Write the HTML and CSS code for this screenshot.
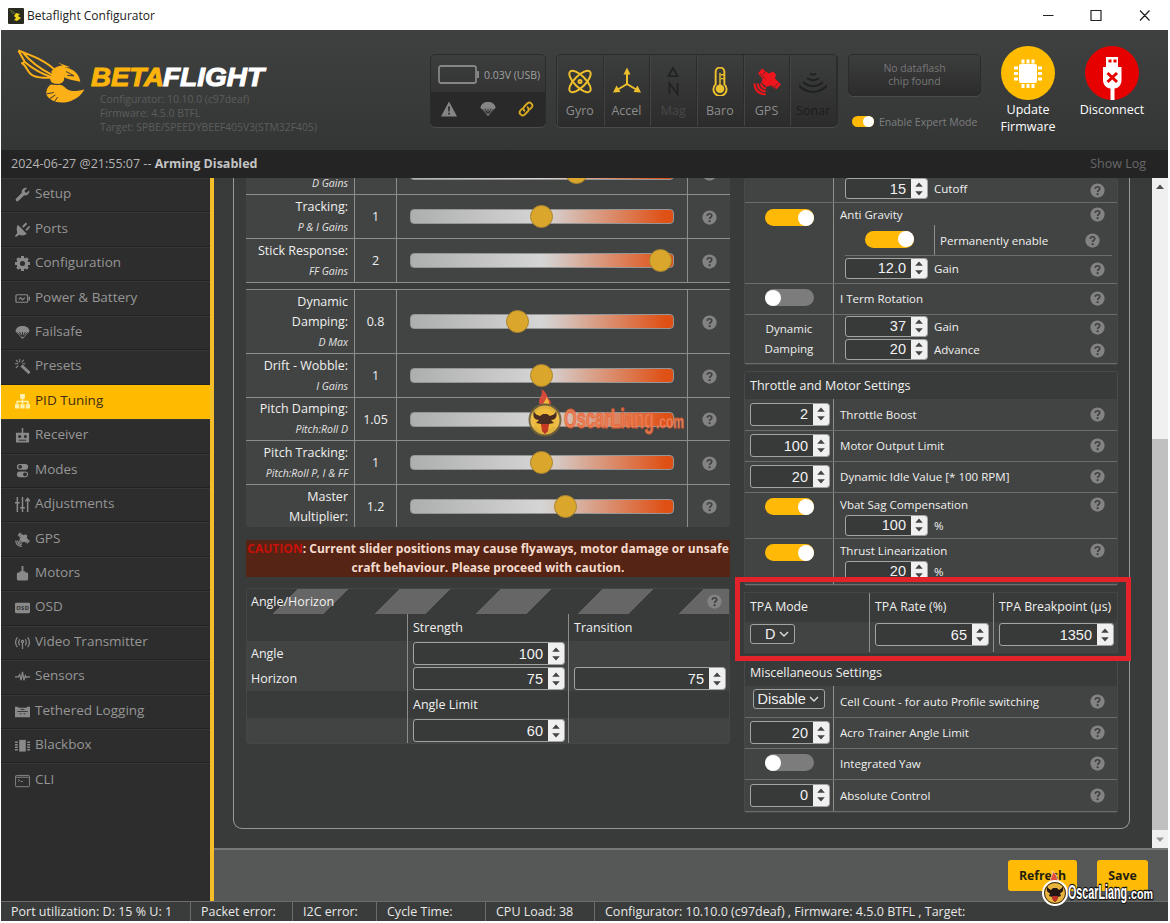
FILE: index.html
```html
<!DOCTYPE html>
<html lang="en">
<head>
<meta charset="utf-8">
<title>Betaflight Configurator</title>
<link rel="stylesheet" href="styles.css">
</head>
<body>
<svg class="defs" width="0" height="0">
  <symbol id="spin" viewBox="0 0 16 22"><path d="M8 4.500l3.800 4.200H4.200zM8 17.500l3.800-4.200H4.200z" fill="#444"/></symbol>
  <symbol id="help" viewBox="0 0 16 16"><circle cx="8" cy="8" r="7.600" fill="#828382"/><path d="M5.600 6.300C5.700 4.700 6.700 4 8 4s2.400.8 2.400 2.100C10.400 7.700 8.100 7.800 8.100 9.600" fill="none" stroke="#3f4040" stroke-width="1.800"/><circle cx="8.100" cy="11.900" r="1.150" fill="#3f4040"/></symbol>
  <symbol id="chev" viewBox="0 0 10 8"><path d="M1 2l4 4 4-4" fill="none" stroke="#ddd" stroke-width="1.400"/></symbol>
  <symbol id="chute" viewBox="0 0 16 16"><path d="M.5 6.500C1 3 4 1 8 1s7 2 7.500 5.500L14.500 8 8 15 1.500 8z" fill="currentColor"/><path d="M2.500 8L7.400 13M13.500 8L8.600 13M5 7.500L7.500 12.500M11 7.500L8.500 12.500M8 7.500V12" stroke="#2c2c2c" stroke-width="1" fill="none"/></symbol>
  <symbol id="sat" viewBox="0 0 28 28"><g fill="currentColor"><path d="M9 1l7 5 4-2 3 3-1 4 6 6-5 5-6-4-3.500 1.500-5-4.500 1-4L5 6z"/></g><path d="M7 6.500l5 4.500M18.500 18l5 4M13 3l-3 4M24.500 16l-3 4" stroke="#2f3030" stroke-width=".7"/><g fill="none" stroke="currentColor" stroke-width="2.200"><path d="M8 16c.2 2.500 1.800 4.500 5 5M4.700 16c.3 4.500 3.200 7.500 8 8M1.400 16c.3 6.500 4.500 10.500 11.300 11"/></g></symbol>
</svg>

<div class="window">
  <div class="titlebar">
    <svg class="app-icon" viewBox="0 0 16 16"><rect width="16" height="16" rx="1" fill="#292b20"/><path d="M1.500 2l3 1 3 3M3 4l3 2" stroke="#66702e" fill="none"/><path d="M8 5l4 1-2 2 3 2-4 3-3-1 2-2-2-2z" fill="#efd51c"/></svg>
    <span class="title">Betaflight Configurator</span>
    <svg class="win-buttons" viewBox="0 0 107 12" fill="none" stroke="#222" stroke-width="1.200"><path d="M0 5.500h10.500M48 .5h10v10h-10zM97 .5l9.500 10M106.500 .5l-9.500 10"/></svg>
  </div>

  <header class="header">
    <div class="brand">
      <svg class="wasp" viewBox="50 148 204 164">
        <g fill="none" stroke="#fcb017" stroke-width="6" stroke-linejoin="round"><path d="M54 152c36 14 84 30 113 62M54 152l20 35-9 3c18 11 14 30 35 38 16 7 35 6 52 6M67 157c22 28 48 48 88 68M74 187c22 18 44 33 78 44"/></g>
        <g fill="#fcb017"><path d="M172 188l38 14-18 1c28 3 44 18 48 43l-29-6-28-10-6-7c-10-5-19-3-20 9l-4-17c7-11 19-17 34-18z"/><path d="M160 220c12-6 27-1 31 12 3 13-8 22-21 20-14 1-22-8-20-18 1-6 4-11 10-14z"/><path d="M152 254c18-4 35 0 43 10 9 10 22 13 57 5-9 19-32 36-60 39-30 3-56-14-54-29 0-10 5-20 14-25z"/></g>
        <g fill="none" stroke="#373938" stroke-width="3"><path d="M197 215l24 13-20-1M160 278l-20 4M165 285l-17 12M172 292l-10 14M154 252c11 4 28 3 36-4"/></g>
      </svg>
      <div class="brand-text">
        <svg class="wordmark" viewBox="0 0 178 26"><text x="0" y="21" textLength="73" lengthAdjust="spacingAndGlyphs" fill="#fcb40c" stroke="#fcb40c">BETA</text><text x="72" y="21" textLength="101" lengthAdjust="spacingAndGlyphs" fill="#fff" stroke="#fff">FLIGHT</text></svg>
        <div class="version">Configurator: 10.10.0 (c97deaf)<br>Firmware: 4.5.0 BTFL<br>Target: SPBE/SPEEDYBEEF405V3(STM32F405)</div>
      </div>
    </div>

    <div class="power-box">
      <div class="volt"><svg viewBox="0 0 42 20"><rect x="1" y="1" width="37" height="17" rx="2" fill="none" stroke="#858585" stroke-width="1.800"/><path d="M39 6h2v7h-2z" fill="#858585"/></svg><span>0.03V (USB)</span></div>
      <div class="flags">
        <svg viewBox="0 0 16 16"><path d="M8 .5L16 15.500H0z" fill="#858585"/><path d="M7 5.500h2l-.4 5H7.400zM7.200 11.800h1.700v1.700H7.200z" fill="#292929"/></svg>
        <svg viewBox="0 0 16 16" color="#858585"><use href="#chute"/></svg>
        <svg viewBox="0 0 16 16" fill="none" stroke="#d9a91f" stroke-width="1.900" stroke-linecap="round"><path d="M6.300 9.700a3 3 0 0 1 0-4.200L9.500 2.300a3 3 0 0 1 4.200 4.200L12 8.200"/><path d="M9.700 6.300a3 3 0 0 1 0 4.200L6.500 13.700a3 3 0 0 1-4.200-4.200L4 7.800"/></svg>
      </div>
    </div>

    <div class="sensors">
      <div class="sensor"><svg viewBox="0 0 28 28" fill="none" stroke="#eec02d" stroke-width="2"><ellipse cx="14" cy="14" rx="14" ry="5.600" transform="rotate(45 14 14)"/><ellipse cx="14" cy="14" rx="14" ry="5.600" transform="rotate(-45 14 14)"/><circle cx="14" cy="14" r="1.500"/></svg><span>Gyro</span></div>
      <div class="sensor"><svg viewBox="0 0 28 28" fill="#eec02d"><path d="M14 0l3.500 7h-7zM0 25l3.500-7 4 6.500zM28 25l-3.500-7-4 6.500z"/><path d="M14 5v11.500L4 22.500M14 16.500l10 6" fill="none" stroke="#eec02d" stroke-width="2"/></svg><span>Accel</span></div>
      <div class="sensor off mag"><svg viewBox="0 0 28 32" fill="none" stroke="#222" stroke-width="2"><path d="M9 10l5-9 5 9zM10 30V18l9 12V18"/></svg><span>Mag</span></div>
      <div class="sensor"><svg viewBox="0 0 28 30" fill="none" stroke="#eec02d" stroke-width="2"><path d="M9.500 18V5a4.500 4.500 0 0 1 9 0v13a6.800 6.800 0 1 1-9 0z"/><circle cx="14" cy="22.500" r="4.500" fill="#eec02d" stroke="none"/><path d="M14 6v15M15 8h3M15 12h3" stroke-width="1.500"/></svg><span>Baro</span></div>
      <div class="sensor red"><svg viewBox="0 0 28 28"><use href="#sat"/></svg><span>GPS</span></div>
      <div class="sensor off"><svg viewBox="0 0 28 24" fill="none" stroke="#202121" stroke-width="2"><path d="M11 4c2 1.500 4 1.500 6 0M8 8.500c4 3 8 3 12 0M4 12.500c6 5.500 14 5.500 20 0M0 16c8 8.500 20 8.500 28 0"/></svg><span>Sonar</span></div>
    </div>

    <div class="expert">
      <div class="dataflash">No dataflash<br>chip found</div>
      <div class="expert-line"><i class="toggle mini on"></i><span>Enable Expert Mode</span></div>
    </div>

    <div class="action">
      <svg viewBox="0 0 54 54"><circle cx="27" cy="27" r="27" fill="#ffbb00"/><rect x="18" y="18" width="18" height="19" rx="2" fill="#fff"/><path d="M22 13.500v4M27 13.500v4M32 13.500v4M22 38v4M27 38v4M32 38v4M13 22h4M13 27.500h4M13 33h4M37 22h4M37 27.500h4M37 33h4" stroke="#fff" stroke-width="3"/></svg>
      <span>Update<br>Firmware</span>
    </div>
    <div class="action disc">
      <svg viewBox="0 0 54 54"><circle cx="27" cy="27" r="27" fill="#e60000"/><path d="M21 11h12v10h3.500v13c0 5-3 8-7 8.500V54h-4V42.500c-4-.5-7.500-3.500-7.500-8.500V21h3z" fill="#fff"/><path d="M23.500 13.500h3v3h-3zM28.500 13.500h3v3h-3z" fill="#e60000"/><path d="M22.500 27l9.500 9M32 27l-9.500 9" stroke="#e60000" stroke-width="3"/></svg>
      <span>Disconnect</span>
    </div>
  </header>

  <div class="logbar"><span>2024-06-27 @21:55:07 -- <b>Arming Disabled</b></span><span class="show-log">Show Log</span></div>

  <div class="body">
    <nav class="sidebar">
      <a><svg viewBox="0 0 16 16"><path d="M1 12.500l6.300-6.300C6.500 3 9.500 0 13 1l-2.800 2.800.4 1.900 1.900.4L15.200 3.500c.8 3.300-2.200 6.300-5.300 5.300L3.500 15A1.800 1.800 0 0 1 1 12.500z"/></svg>Setup</a>
      <a><svg viewBox="0 0 16 16"><path d="M3 3l9.500 9.500C10 15 6.500 14.500 4.500 13.500L1 16 0 15l2.500-3.500C1.500 9 1.500 5.500 3 3zM7.500 4.500L11.500.5l1.500 1.500-4 4zM11.200 8l4-4L16 5.500l-3.500 4z"/></svg>Ports</a>
      <a><svg viewBox="0 0 16 16"><circle cx="8" cy="8" r="4.500" fill="none" stroke="currentColor" stroke-width="3.600"/><path d="M8 0v3M8 13v3M0 8h3M13 8h3M2.400 2.400l2 2M11.600 11.600l2 2M2.400 13.600l2-2M11.600 4.400l2-2" stroke="currentColor" stroke-width="3.200"/></svg>Configuration</a>
      <a><svg viewBox="0 0 16 16" fill="none" stroke="currentColor" stroke-width="1.300"><rect x="1" y="4" width="12.500" height="8" rx="1"/><path d="M15.300 6v4M4 9l2-2 2 2.500L10.500 7"/></svg>Power &amp; Battery</a>
      <a><svg viewBox="0 0 16 16"><use href="#chute"/></svg>Failsafe</a>
      <a><svg viewBox="0 0 16 16"><path d="M6.500 8L8 6.500l8 7.500-1.500 1.500zM5 0v3.500M0 5h3.500M1 1l2.500 2.500M9.500 1L7 3.500M1 9.500L3.500 7M11 5H8" stroke="currentColor" stroke-width="1.100"/></svg>Presets</a>
      <a class="active"><svg viewBox="0 0 16 16"><path d="M5.500 0h5v5h-5zM0 11h4.600v4.500H0zM5.700 11h4.600v4.500H5.700zM11.400 11H16v4.500h-4.600z"/><path d="M8 4v7M2.300 11V8h11.400v3" fill="none" stroke="currentColor" stroke-width="1.600"/></svg>PID Tuning</a>
      <a><svg viewBox="0 0 16 16"><path d="M7.200 0h1.600v5H15v10.500H1V5h6.200z"/><g fill="#2d2d2d"><circle cx="5" cy="9" r="1.600"/><circle cx="11" cy="9" r="1.600"/><path d="M4 12.500h8v1H4z"/></g></svg>Receiver</a>
      <a><svg viewBox="0 0 16 16"><rect x="2" y="1" width="12" height="6.200" rx="3.100"/><rect x="2" y="9" width="12" height="6.200" rx="3.100"/><g fill="#2d2d2d"><circle cx="5.500" cy="4.100" r="2"/><circle cx="10.700" cy="12.100" r="2"/></g></svg>Modes</a>
      <a><svg viewBox="0 0 16 16" fill="none" stroke="currentColor" stroke-width="1.600"><path d="M2.500 0v16M0 6h5M8 0v16M5.500 11.500h5M13.500 2v14M11 4.500L13.500 1.500 16 4.500"/></svg>Adjustments</a>
      <a><svg viewBox="0 0 28 28"><use href="#sat"/></svg>GPS</a>
      <a><svg viewBox="0 0 16 16"><path d="M7 0h2v5.500h2V7h1.500c1 0 1.500.6 1.500 1.500V14l-1 1.500H3L2 14V8.500C2 7.600 2.500 7 3.500 7H5V5.500h2z"/></svg>Motors</a>
      <a><svg viewBox="0 0 16 16"><rect y="3" width="16" height="11" rx="1.200"/><text x="1.300" y="10.800" font-size="6" font-weight="700" textLength="13.400" fill="#2d2d2d">OSD</text></svg>OSD</a>
      <a><svg viewBox="0 0 16 16" fill="none" stroke="currentColor" stroke-width="1.300"><path d="M8 8v7M2.500 2.500C0 6 0 9.500 2.500 13M13.500 2.500C16 6 16 9.500 13.500 13M5 4.500C3.500 7 3.500 8.800 5 11M11 4.500c1.500 2.500 1.500 4.300 0 6.500"/><circle cx="8" cy="7" r="1.200"/></svg>Video Transmitter</a>
      <a><svg viewBox="0 0 16 16" fill="none" stroke="currentColor" stroke-width="1.300"><path d="M0 8.500h3.500L5 6l1.500 6L8 3l1.500 9L11 7l1 2 1-.5h3"/></svg>Sensors</a>
      <a><svg viewBox="0 0 16 16"><path d="M0 3h3l1 1h8l1-1h3v11H0z"/><path d="M2.500 8h11M5 10.500h2M9 10.500h2M6 5.800h4" stroke="#2d2d2d" stroke-width=".9"/></svg>Tethered Logging</a>
      <a><svg viewBox="0 0 16 16"><path d="M4.500 2h7v12.500h-7z"/><path d="M0 4.500h3M0 7.200h3M0 9.900h3M0 12.600h3M13 4.500h3M13 7.200h3M13 9.900h3M13 12.600h3" stroke="currentColor" stroke-width="1.500"/></svg>Blackbox</a>
      <a class="cli"><svg viewBox="0 0 16 16" fill="none" stroke="currentColor"><rect x=".6" y="2.600" width="14.800" height="12" rx="1"/><path d="M1 4.500h14M3.500 7l1.500 1-1.500 1M6 9h2.500"/></svg>CLI</a>
    </nav>

    <div class="main">
      <div class="scroll-row">
        <div class="viewport">
          <div class="panel">
            <div class="col-left">
              <div class="sliders">
                <div class="srow clipped"><div class="lbl"><em>D Gains</em></div><div class="val"></div><div class="sl"><div class="track"><i style="left:63.300%"></i></div></div><div class="hp"><svg class="help"><use href="#help"/></svg></div></div>
                <div class="srow"><div class="lbl">Tracking:<em>P &amp; I Gains</em></div><div class="val">1</div><div class="sl"><div class="track"><i style="left:49.800%"></i></div></div><div class="hp"><svg class="help"><use href="#help"/></svg></div></div>
                <div class="srow"><div class="lbl">Stick Response:<em>FF Gains</em></div><div class="val">2</div><div class="sl"><div class="track"><i style="left:95.300%"></i></div></div><div class="hp"><svg class="help"><use href="#help"/></svg></div></div>
              </div>
              <div class="sliders second">
                <div class="srow tall"><div class="lbl">Dynamic<br>Damping:<em>D Max</em></div><div class="val">0.8</div><div class="sl"><div class="track"><i style="left:40.700%"></i></div></div><div class="hp"><svg class="help"><use href="#help"/></svg></div></div>
                <div class="srow"><div class="lbl">Drift - Wobble:<em>I Gains</em></div><div class="val">1</div><div class="sl"><div class="track"><i style="left:49.800%"></i></div></div><div class="hp"><svg class="help"><use href="#help"/></svg></div></div>
                <div class="srow short"><div class="lbl">Pitch Damping:<em>Pitch:Roll D</em></div><div class="val">1.05</div><div class="sl"><div class="track"><i style="left:51%"></i></div></div><div class="hp"><svg class="help"><use href="#help"/></svg></div></div>
                <div class="srow"><div class="lbl">Pitch Tracking:<em>Pitch:Roll P, I &amp; FF</em></div><div class="val">1</div><div class="sl"><div class="track"><i style="left:49.800%"></i></div></div><div class="hp"><svg class="help"><use href="#help"/></svg></div></div>
                <div class="srow last"><div class="lbl">Master<br>Multiplier:</div><div class="val">1.2</div><div class="sl"><div class="track"><i style="left:59%"></i></div></div><div class="hp"><svg class="help"><use href="#help"/></svg></div></div>
              </div>

              <div class="caution"><span>CAUTION</span>: Current slider positions may cause flyaways, motor damage or unsafe<br>craft behaviour. Please proceed with caution.</div>

              <div class="angle">
                <div class="angle-head"><span>Angle/Horizon</span><svg class="help"><use href="#help"/></svg></div>
                <div class="arow dark"><div></div><div>Strength</div><div>Transition</div></div>
                <div class="arow"><div>Angle</div><div><span class="num">100<svg><use href="#spin"/></svg></span></div><div></div></div>
                <div class="arow"><div>Horizon</div><div><span class="num">75<svg><use href="#spin"/></svg></span></div><div><span class="num">75<svg><use href="#spin"/></svg></span></div></div>
                <div class="arow dark"><div></div><div>Angle Limit</div><div></div></div>
                <div class="arow"><div></div><div><span class="num">60<svg><use href="#spin"/></svg></span></div><div></div></div>
              </div>
            </div>

            <div class="col-right">
              <div class="table">
                <div class="trow h25"><div class="c1"></div><div class="c2"><div class="line sub cut"><span class="num small">15<svg><use href="#spin"/></svg></span>Cutoff<svg class="help"><use href="#help"/></svg></div></div></div>
                <div class="trow h81"><div class="c1 top"><i class="toggle on"></i></div><div class="c2">
                  <div class="line l22">Anti Gravity<svg class="help"><use href="#help"/></svg></div>
                  <div class="line perm"><div><i class="toggle on"></i></div><span>Permanently enable</span><svg class="help"><use href="#help"/></svg></div>
                  <div class="line sub l25"><span class="num small">12.0<svg><use href="#spin"/></svg></span>Gain<svg class="help"><use href="#help"/></svg></div>
                </div></div>
                <div class="trow h31"><div class="c1 off"><i class="toggle"></i></div><div class="c2"><div class="line">I Term Rotation<svg class="help"><use href="#help"/></svg></div></div></div>
                <div class="trow h49"><div class="c1 damp">Dynamic<br>Damping</div><div class="c2">
                  <div class="line sub l23"><span class="num small">37<svg><use href="#spin"/></svg></span>Gain<svg class="help"><use href="#help"/></svg></div>
                  <div class="line sub l23"><span class="num small">20<svg><use href="#spin"/></svg></span>Advance<svg class="help"><use href="#help"/></svg></div>
                </div></div>
              </div>

              <div class="table">
                <div class="thead">Throttle and Motor Settings</div>
                <div class="trow h32"><div class="c1"><span class="num">2<svg><use href="#spin"/></svg></span></div><div class="c2"><div class="line">Throttle Boost<svg class="help"><use href="#help"/></svg></div></div></div>
                <div class="trow h31"><div class="c1"><span class="num">100<svg><use href="#spin"/></svg></span></div><div class="c2"><div class="line">Motor Output Limit<svg class="help"><use href="#help"/></svg></div></div></div>
                <div class="trow h31"><div class="c1"><span class="num">20<svg><use href="#spin"/></svg></span></div><div class="c2"><div class="line">Dynamic Idle Value [* 100 RPM]<svg class="help"><use href="#help"/></svg></div></div></div>
                <div class="trow h46"><div class="c1 top"><i class="toggle on"></i></div><div class="c2"><div class="line l22">Vbat Sag Compensation<svg class="help"><use href="#help"/></svg></div><div class="line sub l20"><span class="num small">100<svg><use href="#spin"/></svg></span>%</div></div></div>
                <div class="trow h46"><div class="c1 top"><i class="toggle on"></i></div><div class="c2"><div class="line l22">Thrust Linearization<svg class="help"><use href="#help"/></svg></div><div class="line sub l20"><span class="num small">20<svg><use href="#spin"/></svg></span>%</div></div></div>
              </div>

              <div class="tpa">
                <div><p>TPA Mode</p><span class="select narrow">D<svg><use href="#chev"/></svg></span></div>
                <div><p>TPA Rate (%)</p><span class="num">65<svg><use href="#spin"/></svg></span></div>
                <div><p>TPA Breakpoint (µs)</p><span class="num">1350<svg><use href="#spin"/></svg></span></div>
              </div>

              <div class="table">
                <div class="thead misc">Miscellaneous Settings</div>
                <div class="trow h32"><div class="c1 csel"><span class="select">Disable<svg><use href="#chev"/></svg></span></div><div class="c2"><div class="line">Cell Count - for auto Profile switching<svg class="help"><use href="#help"/></svg></div></div></div>
                <div class="trow h31"><div class="c1"><span class="num">20<svg><use href="#spin"/></svg></span></div><div class="c2"><div class="line">Acro Trainer Angle Limit<svg class="help"><use href="#help"/></svg></div></div></div>
                <div class="trow h31"><div class="c1 off"><i class="toggle"></i></div><div class="c2"><div class="line">Integrated Yaw<svg class="help"><use href="#help"/></svg></div></div></div>
                <div class="trow h32"><div class="c1"><span class="num">0<svg><use href="#spin"/></svg></span></div><div class="c2"><div class="line">Absolute Control<svg class="help"><use href="#help"/></svg></div></div></div>
              </div>
            </div>
          </div>
        </div>
        <div class="scrollbar"><svg viewBox="0 0 16 18"><path d="M8 6.500l4 4.500H4z" fill="#505050"/></svg><div class="thumb"></div><svg viewBox="0 0 16 18"><path d="M8 12l4-4.500H4z" fill="#999"/></svg></div>
      </div>
      <div class="toolbar"><button>Refresh</button><button class="save">Save</button></div>
    </div>
  </div>

  <footer class="status">
    <span class="s1">Port utilization: D: 15 % U: 1</span><span class="s2">Packet error:</span><span class="s3">I2C error:</span><span class="s4">Cycle Time:</span><span class="s5">CPU Load: 38</span><span class="s6">Configurator: 10.10.0 (c97deaf) , Firmware: 4.5.0 BTFL , Target:</span>
  </footer>

  <div class="highlight"></div>
  <svg class="mark mid" viewBox="0 0 160 50">
    <path d="M14 18C6 10 17 8 13 0c8 4 5 9 9 11 2 4 0 6-2 8z" fill="#e24c3a"/><path d="M16 18c-3-5 3-6 2-10 5 5 3 8 1 11z" fill="#ffc43b"/>
    <circle cx="17" cy="31" r="15.500" fill="#f0bd3e" stroke="#72613b" stroke-width="2"/><path d="M6 22c1 4 4 4 6 5l3-2h4l3 2c2-1 5-1 6-5 2 6-1 9-5 9l3 3-5 1-2 5-2 2-2-2-2-5-5-1 3-3c-4 0-7-3-5-9z" fill="#3b2020"/><path d="M13 35h8l-1 7-3 3-3-3z" fill="#c22f24"/>
    <text x="36" y="39" textLength="90" lengthAdjust="spacingAndGlyphs" font-size="28">OscarLiang</text><text class="com" x="128" y="39" textLength="28" lengthAdjust="spacingAndGlyphs" font-size="18">.com</text>
  </svg>
  <svg class="mark corner" viewBox="0 0 114 36">
    <path d="M10 12C6 6 12 5 10 0c6 4 4 6 6 9 1 3 0 4-2 5z" fill="#e24c3a" stroke="#fff" stroke-width=".6"/>
    <circle cx="13" cy="22" r="12" fill="#e9b43d" stroke="#fff" stroke-width="2"/><circle cx="13" cy="22" r="10.500" fill="none" stroke="#302a1c"/><path d="M5 15c1 3 3 3 4 4l2-2h4l2 2c1-1 3-1 4-4 1 5-1 7-3 7l1 3-3 1-1 3-2 2-2-2-1-3-3-1 1-3c-2 0-4-2-3-7z" fill="#241614"/><path d="M10 25h6l-1 4-2 2-2-2z" fill="#c22f24"/>
    <text x="26" y="28" textLength="59" lengthAdjust="spacingAndGlyphs" font-size="20">OscarLiang</text><text x="86" y="28" textLength="25" lengthAdjust="spacingAndGlyphs" font-size="14">.com</text>
  </svg>
</div>
</body>
</html>
```
FILE: styles.css
```css
* { box-sizing: border-box; }
body { margin: 0; background: #fff; font: 12px "Open Sans", sans-serif; color: #f0f0f0; overflow: hidden; }
svg { display: block; flex: none; }
.defs { position: absolute; }
.window { position: relative; width: 1170px; height: 923px; padding: 0 2px 0 1px; display: flex; flex-direction: column; background: #fff; }

.titlebar { height: 30px; flex: none; display: flex; align-items: center; padding: 1px 18px 0 7px; color: #222; }
.app-icon { width: 16px; height: 16px; }
.title { font-size: 12px; margin-left: 3px; flex: 1; }
.win-buttons { width: 107px; height: 12px; }

.header { height: 120px; flex: none; display: flex; align-items: flex-start; background: linear-gradient(#3f4140, #343636); }
.brand { display: flex; width: 429px; padding: 19px 0 0 16px; }
.wasp { width: 68px; height: 55px; }
.wordmark { width: 178px; height: 26px; margin: 16px 0 0 6px; overflow: visible; font: italic 700 25px "Liberation Sans", sans-serif; stroke-width: 1px; }
.version { margin: 1px 0 0 15px; font-size: 10.400px; line-height: 14px; color: #5b5d5c; white-space: nowrap; }
.power-box, .sensors, .dataflash { border: 1px solid #2a2b2b; border-radius: 5px; background: linear-gradient(#3c3d3d, #2c2c2c); box-shadow: 0 1px 0 #4a4c4b; }
.power-box { width: 116px; height: 73px; margin-top: 24px; overflow: hidden; }
.volt { height: 37px; display: flex; align-items: center; gap: 4px; padding: 3px 0 0 7px; font-size: 10.500px; color: #a0a0a0; white-space: nowrap; }
.volt svg { width: 42px; height: 20px; }
.flags { height: 35px; background: #292929; display: flex; align-items: center; justify-content: space-between; padding: 0 11px 2px 10px; }
.flags svg { width: 16px; height: 16px; }
.sensors { width: 282px; height: 73px; margin: 24px 0 0 10px; display: flex; overflow: hidden; }
.sensor { flex: 1; border-right: 1px solid #2b2b2b; border-left: 1px solid #444; display: flex; flex-direction: column; align-items: center; justify-content: space-between; padding: 12px 1px 7px 0; }
.sensor svg { width: 28px; height: 29px; }
.sensor.red { color: #ee161c; }
.sensor span { font-size: 12.500px; line-height: 17px; color: #8d8d8d; }
.sensor.off span { color: #1b1c1c; }
.sensor.mag span { color: #474848; }
.expert { width: 133px; margin: 24px 0 0 10px; }
.dataflash { height: 42px; text-align: center; font-size: 10.500px; line-height: 13px; padding-top: 7px; color: #777; }
.expert-line { display: flex; align-items: center; gap: 5px; margin: 18px 0 0 4px; height: 15px; font-size: 10.500px; color: #7d7f7e; white-space: nowrap; }
.action { width: 84px; margin: 16px 0 0 5px; display: flex; flex-direction: column; align-items: center; text-align: center; font-size: 12.500px; line-height: 17px; color: #fff; }
.action svg { width: 54px; height: 54px; margin-bottom: 1px; }
.action.disc { margin-left: 0; }

.toggle { position: relative; display: block; width: 49px; height: 17px; border-radius: 9px; background: #7c7c7c; flex: none; }
.toggle::after { content: ""; display: block; width: 16px; height: 16px; margin-top: .5px; border-radius: 50%; background: #fff; }
.toggle.on { background: #ffb906; padding-left: 33px; }
.toggle.mini { width: 22px; height: 11px; padding-left: 11px; }
.toggle.mini::after { width: 11px; height: 11px; margin: 0; }

.logbar { height: 28px; flex: none; background: #242424; display: flex; justify-content: space-between; align-items: center; padding: 0 22px 1px 10px; font-size: 12.500px; color: #b4b4b4; }
.logbar b { color: #c4c4c4; }
.show-log { color: #686868; font-size: 12.500px; }

.body { height: 723px; flex: none; display: flex; }
.sidebar { width: 213px; flex: none; background: #2d2d2d; border-right: 4px solid #f5bd27; }
.sidebar a { height: 34.450px; display: flex; align-items: center; gap: 5px; padding: 0 0 4px 14px; font-size: 13.500px; color: #969696; border-bottom: 1px solid #222; border-top: 1px solid #373737; white-space: nowrap; }
.sidebar svg { width: 15px; height: 15px; margin-top: 3px; fill: currentColor; color: #8a8a8a; }
.sidebar svg[fill="none"] { fill: none; }
.sidebar a.active { background: #fb0; color: #402c12; border-color: #fb0; }
.sidebar .active svg { color: #fff2b0; }
.sidebar a.cli { border-bottom-color: transparent; }

.main { flex: 1; display: flex; flex-direction: column; background: #393b3a; }
.scroll-row { height: 670px; display: flex; overflow: hidden; }
.viewport { width: 938px; padding-left: 20px; overflow: hidden; }
.panel { width: 897px; height: 651px; border: 1px solid #969896; border-top: 0; border-radius: 0 0 9px 9px; display: flex; gap: 14px; padding-left: 11px; margin-left: -1px; }
.col-left { width: 484px; margin-left: 1px; }
.col-right { width: 374px; }

.sliders { background: #424443; }
.second { margin-top: 6px; border-top: 1px solid #8c8e8c; border-radius: 0 0 4px 4px; }
.srow { height: 44px; display: grid; grid-template-columns: 109px 42px 291px 42px; border-bottom: 1px solid #8c8e8c; }
.srow > div { border-right: 1px solid #8c8e8c; display: flex; align-items: center; justify-content: center; }
.srow > .hp { border-right: 0; padding-top: 1px; }
.srow > .lbl { display: block; text-align: right; padding: 2px 6px 0 0; font-size: 12.500px; line-height: 20px; white-space: nowrap; }
.lbl em { display: block; font-size: 10.500px; line-height: 20px; color: #e2e2e2; }
.srow .val { font-size: 12.500px; }
.srow.clipped { margin-top: -27px; }
.srow.clipped .lbl { padding-top: 22px; }
.srow.tall { height: 64px; }
.srow.tall .lbl { padding-top: 2px; }
.srow.short { height: 43px; }
.srow.short .lbl { padding-top: 1px; }
.srow.last { height: 42px; border-bottom: 0; }
.srow.last .lbl { padding-top: 2px; }
.track { position: relative; width: 264px; height: 15px; border-radius: 4px; background: linear-gradient(90deg, #adafae, #d4d5d4 50%, #d6c5be 57%, #df5015 97%); border: 1px solid #969696; }
.track i { position: absolute; top: -5px; width: 23px; height: 23px; margin-left: -11.500px; border-radius: 50%; background: #dba62c; border: 1px solid #a8842f; }
.help { width: 15px; height: 15px; }

.caution { margin-top: 13px; height: 37px; background: #552414; text-align: center; font-weight: 700; font-size: 12.050px; line-height: 18.500px; white-space: nowrap; color: #f6dccf; }
.caution span { color: #c8100b; }

.angle { margin-top: 11px; border: 1px solid #454746; border-radius: 3px; background: #424443; font-size: 12.500px; }
.angle-head { height: 25px; display: flex; align-items: center; justify-content: space-between; padding: 0 7px 0 4px; background: repeating-linear-gradient(135deg, #393a3a 0 35.900px, #656665 35.900px 71.800px); }
.arow { height: 25px; display: grid; grid-template-columns: 161px 161px 1fr; }
.arow.dark { height: 27px; }
.arow.dark > div { background: #393b3a; }
.arow > div { padding: 0 4px; display: flex; align-items: center; border-right: 1px solid #8c8e8c; }
.arow > div + div { padding-left: 5px; padding-right: 3px; }
.arow > div:last-child { border-right: 0; }

.num { width: 100%; height: 23px; border: 1px solid #a2a4a2; border-radius: 3px; background: #383939; display: flex; justify-content: flex-end; align-items: center; gap: 5px; font: 14.500px "Liberation Sans", Arial, sans-serif; color: #f2f2f2; flex: none; overflow: hidden; }
.num svg { width: 16px; height: 22px; background: #f0f0f0; }
.num.small { width: 83px; height: 21px; margin-right: 6px; }

.table { background: #424443; border: 1px solid #484a49; border-top: 0; border-radius: 3px; margin-bottom: 6px; font-size: 11.550px; }
.thead { height: 28px; background: #393b3a; padding: 5px 0 0 5px; font-size: 12.500px; line-height: 17px; border-top: 1px solid #484a49; }
.thead.misc { height: 27px; padding-top: 4px; }
.trow { display: grid; grid-template-columns: 89px 1fr; border-bottom: 1px solid #6b6d6b; }
.h25 { height: 25px; } .h81 { height: 81px; } .h31 { height: 31px; } .h32 { height: 32px; } .h46 { height: 46px; } .h49 { height: 49px; }
.c1 { border-right: 1px solid #8c8e8c; padding: 0 3px 1px 5px; display: flex; align-items: center; justify-content: center; }
.c1.top { align-items: flex-start; padding: 6px 4px 0; }
.h46 .c1.top { padding-top: 5px; }
.c1.off { padding: 0 4px 3px; }
.c1.damp { text-align: center; line-height: 20px; padding: 0 4px 1px; }
.c2 { padding: 0 12px 1px 6px; display: flex; flex-direction: column; justify-content: center; }
.h81 .c2, .h46 .c2, .h49 .c2 { justify-content: flex-start; }
.line { display: flex; align-items: center; flex: none; white-space: nowrap; }
.line .help { margin-left: auto; }
.sub { padding-left: 5px; }
.sub .help { margin-top: 3px; }
.cut { margin-top: -2px; }
.l22 { height: 22px; } .l25 { height: 24px; } .l23 { height: 22px; } .l20 { height: 20px; }
.h49 .l23 + .l23 { margin-top: 1px; }
.perm { height: 31px; border-bottom: 1px solid #6b6d6b; margin: 0 -7px 0 5px; padding-right: 12px; }
.perm div { width: 90px; height: 100%; padding: 5px 0 0 20px; border-right: 1px solid #8c8e8c; }
.perm span { margin-left: 5px; }

.tpa { display: grid; grid-template-columns: 125px 124px 1fr; height: 61px; margin-bottom: 6px; background: linear-gradient(#393b3a 29px, #424443 29px); border: 1px solid #454746; font-size: 12.300px; }
.tpa > div { padding: 0 4px 0 5px; border-right: 1px solid #8c8e8c; }
.tpa > div:last-child { border: 0; padding-right: 3px; }
.tpa p { margin: 0 0 3px; height: 27px; line-height: 27px; white-space: nowrap; }
.select { width: 72px; height: 20px; border: 1px solid #a2a4a2; border-radius: 3px; background: #3a3b3b; display: flex; align-items: center; justify-content: space-between; padding: 0 5px 1px 4px; font: 14.500px "Liberation Sans", Arial, sans-serif; }
.select svg { width: 10px; height: 8px; }
.select.narrow { width: 45px; margin-top: 4px; padding-left: 14px; }
.csel { padding-bottom: 5px; padding-right: 6px; }

.scrollbar { width: 16px; background: #f0f0f0; display: flex; flex-direction: column; justify-content: space-between; }
.scrollbar svg { width: 16px; height: 18px; }
.thumb { height: 391px; margin-top: auto; background: #c0c0c0; }
.toolbar { height: 53px; background: #565857; border-top: 2px solid #777978; display: flex; justify-content: flex-end; gap: 20px; padding: 10px 20px 0; }
.toolbar button { width: 69px; height: 31px; border: 0; border-radius: 3px; background: #ffbb05; font: 700 12.300px "Open Sans", sans-serif; color: #241e10; padding: 0; }
.toolbar .save { width: 51px; }

.status { height: 20px; flex: none; background: #3a3c3b; border-top: 1px solid #6b6d6c; display: flex; font-size: 12.500px; line-height: 20px; color: #e8e8e8; }
.status span { padding-left: 10px; border-right: 1px solid #6b6d6c; white-space: nowrap; flex: none; }
.s1 { width: 190px; } .s2 { width: 102px; } .s3 { width: 84px; } .s4 { width: 109px; } .s5 { width: 109px; }
.status .s6 { border: 0; }

.highlight { position: absolute; left: 735px; top: 577px; width: 396px; height: 84px; border: 5px solid #e4222a; }
.mark { position: absolute; font-family: "Liberation Sans Narrow", "Liberation Sans", sans-serif; font-weight: 700; overflow: visible; }
.mid { left: 528px; top: 389px; width: 160px; height: 50px; opacity: .9; }
.mid text { fill: #ef7f55; stroke: #e4602f; stroke-width: 1px; }
.mid .com { fill: #f09a7c; }
.corner { left: 1042px; top: 871px; width: 114px; height: 36px; }
.corner text { fill: #fff; stroke: #151515; stroke-width: 2.500px; paint-order: stroke; }
```
